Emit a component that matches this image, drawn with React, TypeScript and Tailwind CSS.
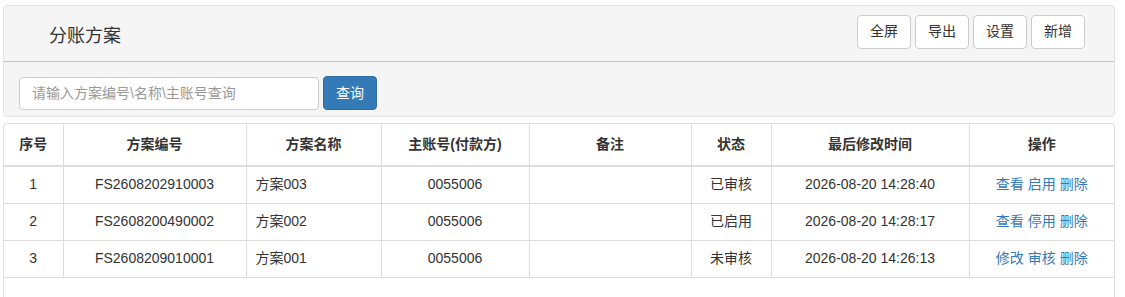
import React from 'react';

const rows = [
  { no: 1, code: 'FS2608202910003', name: '方案003', account: '0055006', status: '已审核', time: '2026-08-20 14:28:40', ops: ['查看', '启用', '删除'] },
  { no: 2, code: 'FS2608200490002', name: '方案002', account: '0055006', status: '已启用', time: '2026-08-20 14:28:17', ops: ['查看', '停用', '删除'] },
  { no: 3, code: 'FS2608209010001', name: '方案001', account: '0055006', status: '未审核', time: '2026-08-20 14:26:13', ops: ['修改', '审核', '删除'] },
];

const toolButtons = ['全屏', '导出', '设置', '新增'];

export default function App() {
  return (
    <div
      className="min-h-[297px] bg-white pl-[3px] pr-[10px] pt-[5px] text-[14px] text-[#333]"
      style={{ fontFamily: '"Liberation Sans", Arial, "Noto Sans CJK SC", sans-serif' }}
    >
      {/* header panel */}
      <div className="w-[1112px] rounded-[4px] border border-[#e3e3e3] bg-[#f5f5f5]">
        <div className="flex h-[56px] items-center justify-between border-b border-[#c4c4c4] pl-[45px] pr-[29px]">
          <h2 className="mt-[4px] text-[18px] leading-none text-[#333]">分账方案</h2>
          <div className="mb-[4px] flex gap-[4px]">
            {toolButtons.map(b => (
              <button
                key={b}
                className="h-[34px] w-[54px] rounded-[4px] border border-[#ccc] bg-white text-[14px] text-[#333]"
              >
                {b}
              </button>
            ))}
          </div>
        </div>
        <div className="flex items-center gap-[4px] pb-[6px] pl-[15px] pt-[14px]">
          <input
            className="h-[33px] w-[300px] rounded-[4px] border border-[#ccc] bg-white px-[12px] text-[14px] outline-none placeholder:text-[#999]"
            placeholder="请输入方案编号\名称\主账号查询"
          />
          <button className="h-[34px] w-[54px] rounded-[4px] border border-[#2e6da4] bg-[#337ab7] text-[14px] text-white">
            查询
          </button>
        </div>
      </div>

      {/* table panel */}
      <div className="mt-[6px] h-[180px] w-[1112px] rounded-[4px] border border-[#ddd] bg-white">
        <table className="w-full table-fixed border-collapse">
          <colgroup>
            <col className="w-[59px]" />
            <col className="w-[183px]" />
            <col className="w-[135px]" />
            <col className="w-[148px]" />
            <col className="w-[162px]" />
            <col className="w-[80px]" />
            <col className="w-[198px]" />
            <col />
          </colgroup>
          <thead>
            <tr className="h-[42px] border-b-2 border-[#ddd]">
              {['序号', '方案编号', '方案名称', '主账号(付款方)', '备注', '状态', '最后修改时间', '操作'].map((h, i) => (
                <th key={h} className={`font-bold ${i < 7 ? 'border-r border-[#ddd]' : ''} text-center`}>
                  {h}
                </th>
              ))}
            </tr>
          </thead>
          <tbody>
            {rows.map(r => (
              <tr key={r.no} className="h-[37px] border-b border-[#ddd]">
                <td className="border-r border-[#ddd] text-center">{r.no}</td>
                <td className="border-r border-[#ddd] text-center">{r.code}</td>
                <td className="border-r border-[#ddd] pl-[9px] text-left">{r.name}</td>
                <td className="border-r border-[#ddd] text-center">{r.account}</td>
                <td className="border-r border-[#ddd]"></td>
                <td className="border-r border-[#ddd] text-center">{r.status}</td>
                <td className="border-r border-[#ddd] text-center">{r.time}</td>
                <td className="text-center">
                  <span className="inline-flex gap-[4px] text-[#337ab7]">
                    {r.ops.map(o => (
                      <a key={o} className="cursor-pointer">{o}</a>
                    ))}
                  </span>
                </td>
              </tr>
            ))}
          </tbody>
        </table>
      </div>
    </div>
  );
}
